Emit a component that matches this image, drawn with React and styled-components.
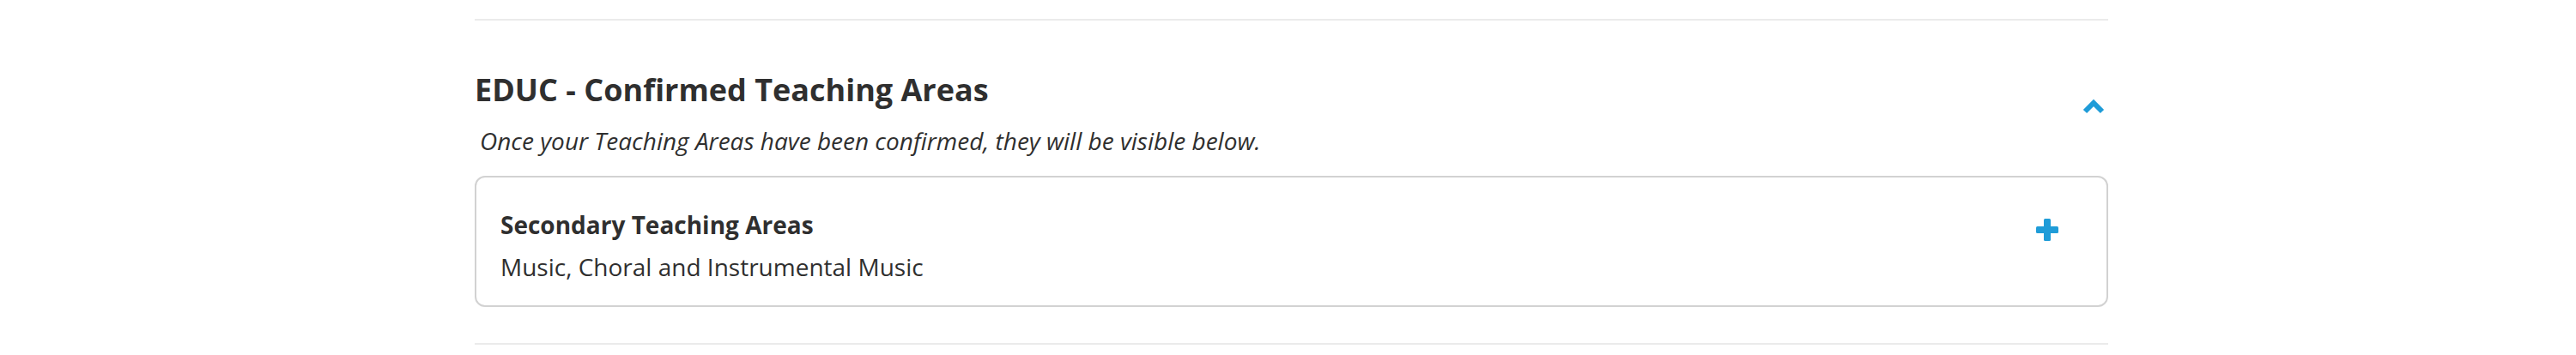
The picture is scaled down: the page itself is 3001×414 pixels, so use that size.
import React from 'react'
import styled, { createGlobalStyle } from 'styled-components'

const GlobalStyle = createGlobalStyle`
  body {
    margin: 0;
    background: #fff;
    font-family: "Open Sans", "Liberation Sans", sans-serif;
    color: #2f2f2f;
  }
`;

const Section = styled.section`
  width: 1903px;
  margin-left: 553px;
  padding-top: 22px;
`;

const Rule = styled.div`
  height: 2px;
  background: #ebebeb;
`;

const Header = styled.div`
  display: flex;
  align-items: flex-start;
  justify-content: space-between;
  padding-top: 56px;
`;

const Titles = styled.div`
  display: flex;
  flex-direction: column;
`;

const Heading = styled.h2`
  margin: 0;
  font-size: 36px;
  font-weight: 700;
  line-height: 50px;
`;

const Note = styled.p`
  margin: 15px 0 0 6px;
  font-size: 28px;
  font-style: italic;
  line-height: 38px;
`;

const Toggle = styled.button`
  border: 0;
  background: none;
  padding: 0;
  margin: 35px 4px 0 0;
  display: flex;
  color: #1f9cd8;
`;

const Card = styled.div`
  margin-top: 22px;
  border: 2px solid #d2d2d2;
  border-radius: 12px;
  display: flex;
  justify-content: space-between;
  padding: 36px 56px 26px 28px;
`;

const CardTitle = styled.div`
  font-size: 28px;
  font-weight: 700;
  line-height: 38px;
`;

const CardText = styled.div`
  margin-top: 11px;
  font-size: 28px;
  line-height: 38px;
`;

const AddButton = styled.button`
  border: 0;
  background: none;
  padding: 0;
  margin-top: 12px;
  align-self: flex-start;
  display: flex;
  color: #1f9cd8;
`;

const Bottom = styled(Rule)`
  margin-top: 42px;
`;

function ChevronUp() {
  return (
    <svg width="26" height="18" viewBox="0 0 26 18">
      <path d="M3 15 L13 5 L23 15" fill="none" stroke="currentColor" strokeWidth="6" strokeLinejoin="miter" />
    </svg>
  )
}

function Plus() {
  return (
    <svg width="26" height="26" viewBox="0 0 26 26" fill="currentColor">
      <rect x="9" y="0" width="8" height="26" rx="1.5" />
      <rect x="0" y="9" width="26" height="8" rx="1.5" />
    </svg>
  )
}

export default function App() {
  return (
    <>
      <GlobalStyle />
      <Section>
        <Rule />
        <Header>
          <Titles>
            <Heading>EDUC - Confirmed Teaching Areas</Heading>
            <Note>Once your Teaching Areas have been confirmed, they will be visible below.</Note>
          </Titles>
          <Toggle aria-label="collapse"><ChevronUp /></Toggle>
        </Header>
        <Card>
          <div>
            <CardTitle>Secondary Teaching Areas</CardTitle>
            <CardText>Music, Choral and Instrumental Music</CardText>
          </div>
          <AddButton aria-label="add"><Plus /></AddButton>
        </Card>
        <Bottom />
      </Section>
    </>
  )
}
